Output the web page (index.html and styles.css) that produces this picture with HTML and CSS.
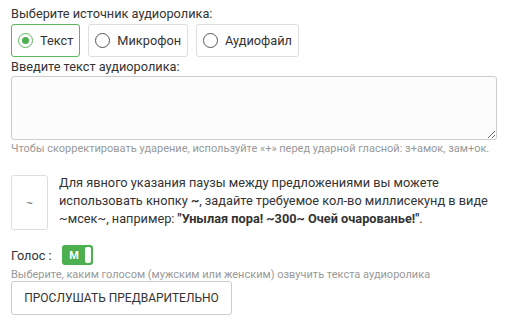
FILE: index.html
```html
<!DOCTYPE html>
<html lang="ru">
<head>
  <meta charset="utf-8">
  <title>Аудиоролик</title>
  <link rel="stylesheet" href="styles.css">
</head>
<body>
  <div class="form">
    <div class="label">Выберите источник аудиоролика:</div>
    <div class="sources">
      <label class="source active"><span class="radio"></span>Текст</label>
      <label class="source"><span class="radio"></span>Микрофон</label>
      <label class="source"><span class="radio"></span>Аудиофайл</label>
    </div>

    <div class="label">Введите текст аудиоролика:</div>
    <textarea class="text"></textarea>
    <div class="hint">Чтобы скорректировать ударение, используйте «+» перед ударной гласной: з+амок, зам+ок.</div>

    <div class="pause">
      <button class="tilde">~</button>
      <p>Для явного указания паузы между предложениями вы можете использовать кнопку <b>~</b>, задайте требуемое кол-во миллисекунд в виде ~мсек~, например: <b>"Унылая пора! ~300~ Очей очарованье!"</b>.</p>
    </div>

    <div class="voice">
      <span>Голос :</span>
      <span class="toggle"><span class="toggle-on">М</span><span class="knob"></span></span>
    </div>
    <div class="hint">Выберите, каким голосом (мужским или женским) озвучить текста аудиоролика</div>

    <button class="btn">ПРОСЛУШАТЬ ПРЕДВАРИТЕЛЬНО</button>
  </div>
</body>
</html>
```

FILE: styles.css
```css
* { margin: 0; padding: 0; box-sizing: border-box; }
body {
  font-family: Roboto, "Liberation Sans", sans-serif;
  font-size: 12.75px;
  color: #333;
  background: #fff;
}
.form { padding: 6px 16px 0 11px; }
.label { line-height: 15px; }
/* источник */
.sources { display: flex; gap: 8px; margin: 3px 0 2px; }
.source {
  display: flex;
  align-items: center;
  height: 33px;
  padding: 0 6px 0 6px;
  border: 1px solid #ddd;
  border-radius: 3px;
}
.source.active { border-color: #5cb85c; }
.radio {
  width: 15px;
  height: 15px;
  border: 1px solid #555;
  border-radius: 50%;
  margin-right: 7px;
  position: relative;
}
.active .radio { border-color: #5cb85c; }
.active .radio::after {
  content: "";
  position: absolute;
  left: 3px; top: 3px;
  width: 7px; height: 7px;
  border-radius: 50%;
  background: #4caf50;
}
/* текст */
.text {
  display: block;
  width: 486px;
  height: 64px;
  margin-top: 2px;
  border: 1px solid #ccc;
  border-radius: 3px;
  background: #fcfcfc;
}
.hint { font-size: 11px; color: #999; line-height: 13px; margin-top: 2px; }
/* пауза */
.pause { display: flex; align-items: center; gap: 11px; margin-top: 20px; }
.tilde {
  flex: none;
  width: 37px;
  height: 55px;
  border: 1px solid #ddd;
  border-radius: 3px;
  background: #fff;
  color: #555;
  font-size: 11px;
}
.pause p { flex: 1; line-height: 18px; margin-top: -3px; }
/* голос */
.voice { display: flex; align-items: center; gap: 10px; margin-top: 15px; }
.toggle {
  display: flex;
  align-items: center;
  width: 31px;
  height: 20px;
  border-radius: 3px;
  background: #4caf50;
  padding: 2px;
}
.toggle-on { flex: 1; color: #fff; font-size: 11px; font-weight: bold; text-align: center; }
.knob { width: 6px; height: 16px; background: #fff; border-radius: 2px; }
.voice + .hint { margin-top: 3px; }
.btn {
  display: block;
  margin-top: 0;
  width: 221px;
  height: 34px;
  border: 1px solid #ccc;
  border-radius: 3px;
  background: #fff;
  color: #333;
  font-family: Roboto, "Liberation Sans", sans-serif;
  font-size: 12px;
}
```
